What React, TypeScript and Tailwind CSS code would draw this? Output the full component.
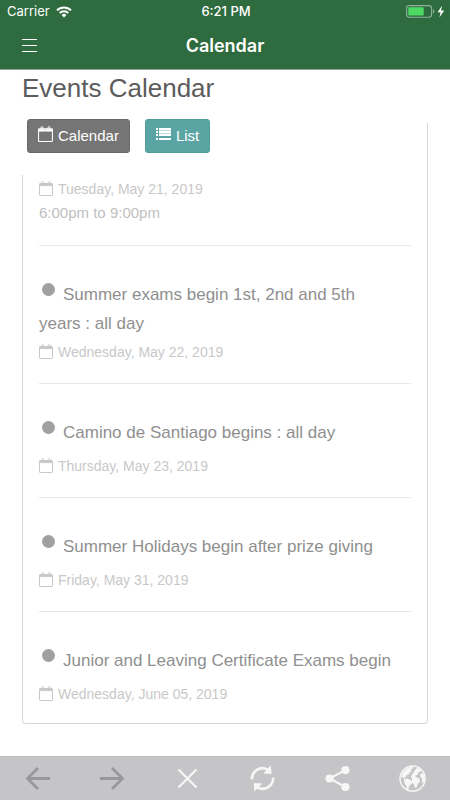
import React from 'react';

type EventItem = { id: number; title: string; date: string };

const events: EventItem[] = [
  { id: 1, title: 'Summer exams begin 1st, 2nd and 5th years : all day', date: 'Wednesday, May 22, 2019' },
  { id: 2, title: 'Camino de Santiago begins : all day', date: 'Thursday, May 23, 2019' },
  { id: 3, title: 'Summer Holidays begin after prize giving', date: 'Friday, May 31, 2019' },
  { id: 4, title: 'Junior and Leaving Certificate Exams begin', date: 'Wednesday, June 05, 2019' },
];

function CalendarIcon({ className }: { className: string }) {
  return (
    <svg viewBox="0 0 14 15" fill="none" stroke="currentColor" className={className}>
      <rect x="0.5" y="2.5" width="13" height="12" rx="0.6" />
      <path d="M0.5 3.5h13M0.5 4.6h13" />
      <path d="M2.7 4.4V1.6q0-1 1-1t1 1v2.8zM9.3 4.4V1.6q0-1 1-1t1 1v2.8z" strokeWidth="0.9" />
    </svg>
  );
}

function ListIcon() {
  return (
    <svg viewBox="0 0 15 12" fill="currentColor" className="mb-1 h-3 w-[15px]">
      <path d="M0 0h2v2H0zM0 3h2v2H0zM0 6h2v2H0zM0 10h2v2H0z" />
      <path d="M3 0h12v2H3zM3 3h12v2H3zM3 6h12v2H3zM3 10h12v2H3z" />
      <path d="M3 2h12v1H3zM3 5h12v1H3z" opacity="0.6" />
    </svg>
  );
}

function StatusBar() {
  return (
    <div className="grid h-[23px] grid-cols-3 items-center pl-[7px] pr-[5px] text-[13px]">
      <div className="flex items-center gap-[6px]">
        <span>Carrier</span>
        <svg viewBox="0 0 16 12" className="h-3 w-4" fill="none" stroke="currentColor" strokeWidth="2">
          <path d="M1 4.4a10 10 0 0 1 14 0" />
          <path d="M3.6 7a6.2 6.2 0 0 1 8.8 0" />
          <path d="M8 11.4 5.6 9a3.4 3.4 0 0 1 4.8 0z" fill="currentColor" stroke="none" />
        </svg>
      </div>
      <div className="text-center font-medium">6:21 PM</div>
      <div className="flex justify-end">
        <svg viewBox="0 0 39 13" className="h-[13px] w-[39px]">
          <rect x="0.6" y="0.6" width="25" height="11.6" rx="2.6" fill="none" stroke="#8fb29a" strokeWidth="1.1" />
          <path d="M27 4.3c1.8.6 1.8 3.6 0 4.2z" fill="#8fb29a" />
          <rect x="2.3" y="2.3" width="15.4" height="8.2" rx="1" fill="#4cd964" />
          <path d="M36.2.4 31.6 7.2h3l-1.2 5.4 4.8-7.2h-3.2z" fill="#fff" />
        </svg>
      </div>
    </div>
  );
}

function DateLine({ date }: { date: string }) {
  return (
    <div className="flex items-center gap-[5px] text-sm leading-6 text-[#c8c8c8]">
      <CalendarIcon className="mb-[2px] h-[15px] w-[14px]" />
      <span>{date}</span>
    </div>
  );
}

const toolbar = [
  {
    label: 'Back',
    color: 'text-[#98989a]',
    icon: <path d="M25 12.5H3M13 2 2.5 12.5 13 23" strokeWidth="2.8" />,
  },
  {
    label: 'Forward',
    color: 'text-[#98989a]',
    icon: <path d="M0 12.5h22M12 2l10.5 10.5L12 23" strokeWidth="2.8" />,
  },
  {
    label: 'Stop',
    color: 'text-[#f7f7f7]',
    icon: <path d="m3.5 3.5 18 18M21.5 3.5l-18 18" strokeWidth="2.2" />,
  },
  {
    label: 'Reload',
    color: 'text-[#f7f7f7]',
    icon: (
      <>
        <path d="M1.9 13.4A10.6 10.6 0 0 1 17.6 3.6M23.1 11.6A10.6 10.6 0 0 1 7.4 21.4" strokeWidth="2.6" />
        <path d="M20.6-.4 21.6 8l-8.2-.6zM4.4 25.4 3.8 17l8.2.6z" fill="currentColor" stroke="none" />
      </>
    ),
  },
  {
    label: 'Share',
    color: 'text-[#f7f7f7]',
    icon: (
      <>
        <path d="M20.5 4 4.5 12.5l16 8.5" strokeWidth="2" />
        <g fill="currentColor" stroke="none">
          <circle cx="4.6" cy="12.5" r="4.1" />
          <circle cx="20.4" cy="4.1" r="4.1" />
          <circle cx="20.4" cy="21" r="4.1" />
        </g>
      </>
    ),
  },
  {
    label: 'Web',
    color: 'text-[#f7f7f7]',
    icon: (
      <>
        <circle cx="12.6" cy="12.6" r="12.6" strokeWidth="1.4" />
        <g fill="currentColor" stroke="none">
          <path d="M3 6 7 2.2l3.6-1.4 2.8.4-1 1.8-1.8.4 1.2 1.6-2 1.2-.6 1.8-2.4 1-.6 1.8-2 .2 1 1.6-1.4.2L2.4 11l-1.6.4z" />
          <path d="m4 13.4 2.6-1 3.2 1.4 2.6 1.8-.8 2.4-2 1.2-1 2.2-.2 3-1.6-.8-.6-3.8L4.4 17z" />
          <path d="m14.6 4.8 1.8-2.6L19 2l2.4 2.2-1.2 1.6-1.8.2-.4 2.4-2.4 1 .2 2 2.6.2 1.6 2.6-.8 2.6-1.6 1-1 3.6-1.8.4-.8-3.2-2.2-2.4.2-3.6-1-1.8 1.4-2.8z" />
          <path d="m20 8.4 2.8-1.4 1.8 3.4.2 3.4-1.8 4-1.2-2.4.4-3-1.8-1.4z" />
        </g>
      </>
    ),
  },
];

export default function App() {
  return (
    <div className="flex min-h-screen flex-col bg-white font-['Liberation_Sans',Arial,sans-serif]">
      <header className="border-b border-[#8ba592] bg-[#2e6b3e] font-[Inter,sans-serif] text-white">
        <StatusBar />
        <div className="grid h-[46px] grid-cols-[60px_1fr_60px] items-center">
          <button aria-label="Menu" className="flex h-full items-center pl-[22px]">
            <svg viewBox="0 0 15 14" className="h-[14px] w-[15px]" stroke="currentColor">
              <path d="M0 .5h15M0 6.5h15M0 12.5h15" strokeWidth="1.2" />
            </svg>
          </button>
          <div className="text-center text-lg font-semibold">Calendar</div>
        </div>
      </header>

      <main className="flex-1 px-[22px] pb-8">
        <h1 className="text-[26px] leading-9 text-[#5c5c5c]">Events Calendar</h1>

        <div className="relative z-10 mr-px -mb-[52px] flex gap-[15px] bg-white pt-[13px] pb-[22px] pl-[5px] text-[15px] text-white">
          <button className="flex h-[34px] items-center gap-[5px] rounded-[3px] border border-[#6a6a6a] bg-[#757575] px-[10px]">
            <CalendarIcon className="mb-1 h-4 w-[15px]" />
            Calendar
          </button>
          <button className="flex h-[34px] items-center gap-[5px] rounded-[3px] border border-[#4f9c9c] bg-[#5aa5a4] px-[10px]">
            <ListIcon />
            List
          </button>
        </div>

        <ul className="rounded-b border border-t-0 border-[#d8d8d8] px-4 pt-[54px]">
          <li className="border-b border-[#e8e8e8] pb-5">
            <DateLine date="Tuesday, May 21, 2019" />
            <div className="text-[15px] leading-6 text-[#c0c0c0]">6:00pm to 9:00pm</div>
          </li>
          {events.map((e) => (
            <li key={e.id} className="border-b border-[#e8e8e8] pt-[34px] pb-[19px] last:border-b-0 last:pb-[17px]">
              <h2 className="mb-1 pr-5 text-[17px] leading-6 text-[#8f8f8f]">
                <span className="inline-flex h-8 w-6 items-start pt-[3px] pl-[3px] align-middle">
                  <span className="size-[13px] rounded-full bg-[#a0a0a0]" />
                </span>
                {e.title}
              </h2>
              <DateLine date={e.date} />
            </li>
          ))}
        </ul>
      </main>

      <footer className="grid h-11 grid-cols-6 border-t border-[#bcbcbe] bg-[#c5c5c7]">
        {toolbar.map((t) => (
          <button key={t.label} aria-label={t.label} className={`flex items-center justify-center ${t.color}`}>
            <svg viewBox="0 0 26 26" fill="none" stroke="currentColor" className="size-[26px] overflow-visible">
              {t.icon}
            </svg>
          </button>
        ))}
      </footer>
    </div>
  );
}
